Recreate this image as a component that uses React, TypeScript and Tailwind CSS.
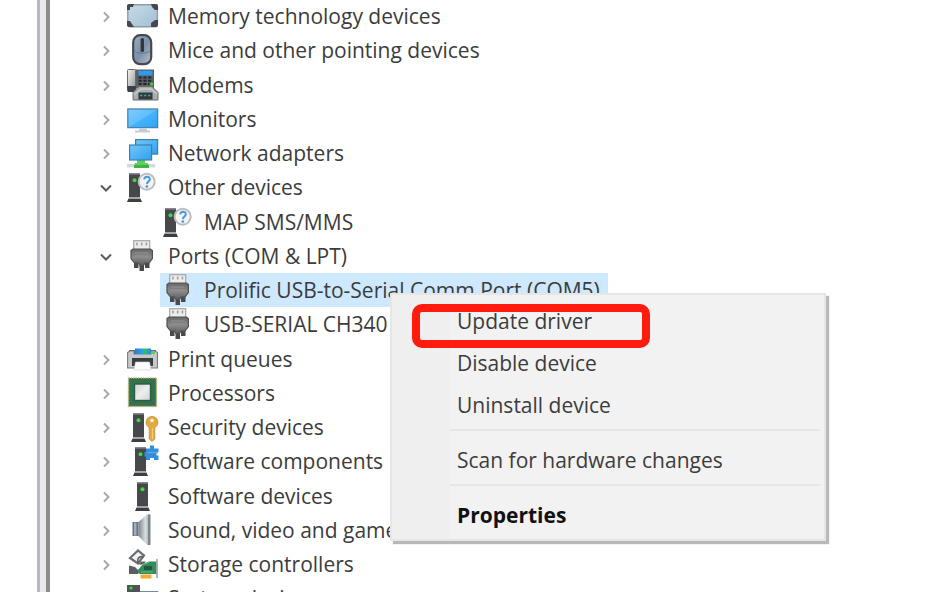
import React from "react";

type IconProps = { id: string };

function Svg({ children }: { children: React.ReactNode }) {
  return (
    <svg viewBox="0 0 32 32" className="size-8 shrink-0" aria-hidden="true">
      {children}
    </svg>
  );
}

function MemoryIcon({ id }: IconProps) {
  return (
    <Svg>
      <defs>
        <linearGradient id={id} x1="0" y1="0" x2="1" y2="1">
          <stop offset="0" stopColor="#c6dbe8" />
          <stop offset="1" stopColor="#a3bfd2" />
        </linearGradient>
      </defs>
      <rect x="0.8" y="4.8" width="29.6" height="22" rx="2" fill={`url(#${id})`} stroke="#8e9ba5" strokeWidth="1.4" />
      <path d="M0 10V6a2 2 0 0 1 2-2h5L6 7H3v3zM31 10V6a2 2 0 0 0-2-2h-5l1 3 3 3zM0 21v4a2 2 0 0 0 2 2h5l-2-3-2-3zM31 20v5a2 2 0 0 1-2 2h-5v-4l4-3z" fill="#45494c" />
    </Svg>
  );
}

function MouseIcon({ id }: IconProps) {
  return (
    <Svg>
      <defs>
        <linearGradient id={id} x1="0" y1="0" x2="1" y2="1">
          <stop offset="0" stopColor="#9fb0c4" />
          <stop offset="0.5" stopColor="#7b8fa8" />
          <stop offset="1" stopColor="#b3c0d0" />
        </linearGradient>
      </defs>
      <rect x="6.2" y="1.2" width="18" height="29" rx="7" fill={`url(#${id})`} stroke="#45494f" strokeWidth="2.2" />
      <path d="M8 17c3 3 11 3 15 0" fill="none" stroke="#5f7187" strokeWidth="0.8" />
      <rect x="13.6" y="4" width="3.4" height="14" rx="1.5" fill="#33373d" />
    </Svg>
  );
}

function ModemIcon({ id }: IconProps) {
  return (
    <Svg>
      <defs>
        <linearGradient id={id} x1="0" y1="0" x2="1" y2="1">
          <stop offset="0" stopColor="#f4f4f4" />
          <stop offset="1" stopColor="#8f8f8f" />
        </linearGradient>
      </defs>
      <rect x="8" y="0.5" width="19" height="19" fill="#5a6066" />
      <rect x="0.5" y="0.5" width="8" height="22" rx="1" fill={`url(#${id})`} stroke="#6b6b6b" />
      <path d="M0 17h9v6H1z" fill="#3d4246" />
      <rect x="11.5" y="1.8" width="14" height="4.6" fill="#2d9cf0" />
      <path d="M11.500 8.500h13M11.500 11.800h13M11.500 15h11" stroke="#22282e" strokeWidth="2" strokeDasharray="3.200 1.600" />
      <circle cx="24.6" cy="15" r="1.6" fill="#3ccf35" />
      <path d="M12 17.500h13l6 6V31H6v-7.500z" fill="#a9abad" stroke="#6c6e70" />
      <path d="M7 26l7-6h10l6 5" fill="none" stroke="#c9cacb" strokeWidth="1.4" />
      <rect x="11.5" y="23.500" width="14" height="7" fill="#33393c" />
      <path d="M13 26.5h11" stroke="#2fa59a" strokeWidth="1.5" strokeDasharray="2.4 1.6" />
    </Svg>
  );
}

function MonitorIcon({ id }: IconProps) {
  return (
    <Svg>
      <defs>
        <linearGradient id={id} x1="0" y1="0" x2="1" y2="1">
          <stop offset="0" stopColor="#7fcbff" />
          <stop offset="0.5" stopColor="#5fbffc" />
          <stop offset="0.52" stopColor="#45b2fa" />
          <stop offset="1" stopColor="#32a5f3" />
        </linearGradient>
      </defs>
      <rect x="0.8" y="6" width="29.8" height="18.6" fill={`url(#${id})`} stroke="#4585b2" strokeWidth="1.3" />
      <path d="M12 25.5h8v2h3v2H8v-2h4z" fill="#c3ccd4" />
    </Svg>
  );
}

function NetworkIcon({ id }: IconProps) {
  return (
    <Svg>
      <defs>
        <linearGradient id={id} x1="0" y1="0" x2="1" y2="1">
          <stop offset="0" stopColor="#75c7fc" />
          <stop offset="1" stopColor="#2f9fec" />
        </linearGradient>
      </defs>
      <rect x="8.6" y="2.6" width="22" height="14.5" fill={`url(#${id})`} stroke="#3d80b0" strokeWidth="1.2" />
      <rect x="0" y="27" width="28" height="3.4" fill="#d4d8d8" />
      <path d="M10 23h8v3h3l1 5H7l1-5h2z" fill="#5fd05a" />
      <path d="M7 28h15v3H7z" fill="#3fb440" />
      <rect x="2.6" y="8" width="22" height="15" fill={`url(#${id})`} stroke="#3d80b0" strokeWidth="1.2" />
    </Svg>
  );
}

function Tower({ x, y = 2.5 }: { x: number; y?: number }) {
  return (
    <g transform={`translate(${x} ${y})`}>
      <path d="M2 0h11v24H2z" fill="#46484c" />
      <path d="M2 0h11v1.5H2z" fill="#6a6d71" />
      <path d="M1.5 25h12l1.5 3.5H0z" fill="#3c3e41" />
      <path d="M2 24h11v1H2z" fill="#a8aaac" />
      <circle cx="7.5" cy="6.8" r="2" fill="#36e03a" />
    </g>
  );
}

function UnknownIcon() {
  return (
    <Svg>
      <Tower x={0} />
      <circle cx="19.700" cy="10.700" r="8" fill="#f3f4f5" stroke="#bcbec0" strokeWidth="2" />
      <path d="M17.200 8.300c.3-3.6 6-3.4 5.6.2-.3 2-2.7 2.2-2.9 4.6" fill="none" stroke="#4f98d8" strokeWidth="2" />
      <circle cx="19.800" cy="15.600" r="1.300" fill="#4f98d8" />
    </Svg>
  );
}

function PortIcon({ id }: IconProps) {
  return (
    <Svg>
      <defs>
        <linearGradient id={id} x1="0" y1="0" x2="0" y2="1">
          <stop offset="0" stopColor="#686868" />
          <stop offset="0.5" stopColor="#8a8a8a" />
          <stop offset="1" stopColor="#5b5b5b" />
        </linearGradient>
      </defs>
      <rect x="6.7" y="0.7" width="16" height="10" fill="#ececec" stroke="#a6a6a6" strokeWidth="1.2" />
      <path d="M10 2.500v3M14.7 2.500v3M19.4 2.500v3" stroke="#a0a0a0" strokeWidth="1.600" />
      <path d="M7 20h4.5v8H7zM18 20h4.5v8H18zM12.5 21h4.5v10h-4.5z" fill="#4a4a4a" />
      <path d="M4 10.5l2-1.5h17.4l2 1.5v8L22 23h-4l-1.5 2.5h-3.6L11.500 23h-4L4 18.500z" fill={`url(#${id})`} stroke="#505050" strokeWidth="1.2" />
      <path d="M8 13h13.500M8 16h13.500" stroke="#9a9a9a" strokeWidth="0.8" />
    </Svg>
  );
}

function PrinterIcon({ id }: IconProps) {
  return (
    <Svg>
      <defs>
        <linearGradient id={id} x1="0" y1="0" x2="1" y2="0">
          <stop offset="0" stopColor="#1f7fe6" />
          <stop offset="0.4" stopColor="#25a0f0" />
          <stop offset="0.65" stopColor="#2fbf62" />
          <stop offset="1" stopColor="#2388ec" />
        </linearGradient>
      </defs>
      <path d="M2 7h27v6H2z" fill="#5d6165" />
      <path d="M0.600 9.500L3 8h4v3h17V8h4l2.500 1.500V25H.6z" fill="#c6c9cb" stroke="#7a7d80" strokeWidth="1.1" />
      <path d="M8 5.500h16V11H8z" fill={`url(#${id})`} />
      <path d="M5 15h21v8h-3l-1-4H9l-1 4H5z" fill="#3b3e41" />
      <path d="M25 10h3" stroke="#3fcf3b" strokeWidth="1.5" />
      <path d="M8.500 19h14l1.500 8H7z" fill="#fbfbfb" stroke="#d0d2d4" strokeWidth="0.6" />
    </Svg>
  );
}

function ProcessorIcon({ id }: IconProps) {
  return (
    <Svg>
      <defs>
        <linearGradient id={id} x1="0" y1="0" x2="1" y2="1">
          <stop offset="0" stopColor="#cfd1d2" />
          <stop offset="0.500" stopColor="#eeeeee" />
          <stop offset="1" stopColor="#cfd1d2" />
        </linearGradient>
      </defs>
      <rect x="1.500" y="1" width="28" height="28.500" fill="#35704f" />
      <rect x="1.500" y="1" width="28" height="28.500" fill="none" stroke="#c9b765" strokeWidth="1.600" strokeDasharray="1.200 1.200" />
      <rect x="7.500" y="7" width="16" height="16.500" fill={`url(#${id})`} stroke="#2a5f44" strokeWidth="1.400" />
    </Svg>
  );
}

function SecurityIcon() {
  return (
    <Svg>
      <Tower x={4} />
      <path d="M25 5.500a5.800 5.800 0 0 1 2.800 10.900V28L25 30.500 22.200 28V16.400A5.800 5.800 0 0 1 25 5.500z" fill="#e2ab42" stroke="#c29338" strokeWidth="0.800" />
      <circle cx="25" cy="9.500" r="1.800" fill="#fff6dc" />
      <path d="M25.500 17v11" stroke="#f3cd74" strokeWidth="1.200" />
    </Svg>
  );
}

function ComponentIcon() {
  return (
    <Svg>
      <Tower x={6} />
      <path d="M19 3.500h4v-3h4v3h4.500v3.500h-2v3.500h2V15H27v-2h-4v2h-4v-3.500h-1.500V7H19z" fill="#338fdb" />
      <path d="M20 7.500h11" stroke="#5aabea" strokeWidth="1.200" />
    </Svg>
  );
}

function DeviceIcon() {
  return (
    <Svg>
      <Tower x={8} />
    </Svg>
  );
}

function SoundIcon({ id }: IconProps) {
  return (
    <Svg>
      <defs>
        <linearGradient id={id} x1="0" y1="0" x2="1" y2="0">
          <stop offset="0" stopColor="#7d878e" />
          <stop offset="0.600" stopColor="#d9dee2" />
          <stop offset="1" stopColor="#9aa2a8" />
        </linearGradient>
      </defs>
      <path d="M5.500 8h6v14h-6z" fill="#66737e" />
      <path d="M7 8.500h2.500v13H7z" fill="#a2afb9" />
      <path d="M11.500 8L20 0.500h3v30.500h-3L11.500 22z" fill={`url(#${id})`} />
      <path d="M21 0.500h2.500V31H21z" fill="#7d868c" />
    </Svg>
  );
}

function StorageIcon() {
  return (
    <Svg>
      <path d="M3 10l8-7.500 6 5-6 8z" fill="#f2f2f2" stroke="#6b6e70" strokeWidth="2.200" />
      <path d="M16.500 9.500a3.500 3.500 0 1 0 .5 5h-3.500" fill="none" stroke="#606365" strokeWidth="1.800" />
      <path d="M2 17.500l6 1.500 4 4-1 3H2z" fill="#5a5e61" />
      <path d="M11 25v-3l5-6 6-2.500h7.500V26H13z" fill="#358b5e" />
      <path d="M17 18h8v4h-8z" fill="#1f5a3c" />
      <path d="M16 16.500l6-2M14 24h12" stroke="#62b88a" strokeWidth="1.200" />
      <path d="M30 11v19" stroke="#9a9ea0" strokeWidth="1.500" />
      <path d="M13.500 26.500h11v4h-11z" fill="#f2aa30" />
    </Svg>
  );
}

function SystemIcon() {
  return (
    <Svg>
      <path d="M0 3h13v26H0z" fill="#4f5356" />
      <circle cx="4" cy="6" r="1.600" fill="#36e03a" />
      <path d="M13 9.500h18V24H13z" fill="#79bdea" stroke="#6f8ea5" />
    </Svg>
  );
}

type Row = {
  label: string;
  icon: (p: IconProps) => React.ReactElement;
  state?: "open" | "child" | "selected";
};

const rows: Row[] = [
  { label: "Memory technology devices", icon: MemoryIcon },
  { label: "Mice and other pointing devices", icon: MouseIcon },
  { label: "Modems", icon: ModemIcon },
  { label: "Monitors", icon: MonitorIcon },
  { label: "Network adapters", icon: NetworkIcon },
  { label: "Other devices", icon: UnknownIcon, state: "open" },
  { label: "MAP SMS/MMS", icon: UnknownIcon, state: "child" },
  { label: "Ports (COM & LPT)", icon: PortIcon, state: "open" },
  { label: "Prolific USB-to-Serial Comm Port (COM5)", icon: PortIcon, state: "selected" },
  { label: "USB-SERIAL CH340", icon: PortIcon, state: "child" },
  { label: "Print queues", icon: PrinterIcon },
  { label: "Processors", icon: ProcessorIcon },
  { label: "Security devices", icon: SecurityIcon },
  { label: "Software components", icon: ComponentIcon },
  { label: "Software devices", icon: DeviceIcon },
  { label: "Sound, video and game controllers", icon: SoundIcon },
  { label: "Storage controllers", icon: StorageIcon },
  { label: "System devices", icon: SystemIcon },
];

function TreeRow({ row, index }: { row: Row; index: number }) {
  const Icon = row.icon;
  const child = row.state === "child" || row.state === "selected";
  const open = row.state === "open";
  return (
    <li
      role="treeitem"
      aria-level={child ? 2 : 1}
      aria-selected={row.state === "selected"}
      aria-expanded={child ? undefined : open}
      className="flex h-[34px] items-stretch nth-[4n+3]:h-[35px]"
    >
      {child ? (
        <span className="w-16 shrink-0" />
      ) : (
        <button type="button" aria-label={`Toggle ${row.label}`} className="mr-2 flex w-5 shrink-0 items-center justify-center pt-0.5">
          <svg viewBox="0 0 12 12" className="size-3" fill="none" strokeWidth="2" aria-hidden="true">
            {open ? <path d="M1 3.500l5 5 5-5" stroke="#5a5a5a" /> : <path d="M4 1.500l4.500 4.500L4 10.500" stroke="#a9a9a9" />}
          </svg>
        </button>
      )}
      <span
        className={
          row.state === "selected"
            ? "flex items-center gap-[9px] bg-[#cde8ff] pr-2 pl-[3px]"
            : "flex items-center gap-[9px] pr-2 pl-[3px]"
        }
      >
        <Icon id={`icon-${index}`} />
        <span>{row.label}</span>
      </span>
    </li>
  );
}

function MenuItem({ label, bold, marked }: { label: string; bold?: boolean; marked?: boolean }) {
  return (
    <button
      type="button"
      role="menuitem"
      className={
        bold
          ? "relative flex h-[42px] w-full items-center pt-1.5 pl-[65px] font-bold text-[#111]"
          : "relative flex h-[42px] w-full items-center pt-1.5 pl-[65px]"
      }
    >
      {label}
      {marked && <span className="absolute top-[7px] left-5 h-11 w-[238px] rounded-[10px] border-8 border-[#ff1c0e]" />}
    </button>
  );
}

function Separator() {
  return (
    <div role="separator" className="flex h-[13px] items-center pr-1 pl-[58px]">
      <span className="h-0.5 w-full bg-[#e6e6e6]" />
    </div>
  );
}

export default function App() {
  return (
    <div className="relative flex h-screen overflow-hidden bg-white font-['Open_Sans','Noto_Sans',sans-serif] text-[21px] leading-8 whitespace-nowrap text-[#3c3c3c]">
      <div className="flex w-[50px] shrink-0 justify-end">
        <span className="w-[3px] bg-[#b6bac4]" />
        <span className="w-[6px] bg-[#e9e9e9]" />
        <span className="w-[4px] bg-[#8c8c8c]" />
      </div>
      <main className="min-w-0 flex-1 pl-[46px]">
        <ul role="tree" aria-label="Devices" className="-mt-px">
          {rows.map((row, i) => (
            <TreeRow key={row.label} row={row} index={i} />
          ))}
        </ul>
      </main>
      <div
        role="menu"
        aria-label="Device actions"
        className="absolute top-[293px] left-[390px] w-[436px] border-2 border-[#e6e6e6] bg-[linear-gradient(90deg,#efefef_58px,#f2f2f2_58px)] pt-0.5 pb-1.5 shadow-[3px_3px_1px_#b8b8b8]"
      >
        <MenuItem label="Update driver" marked />
        <MenuItem label="Disable device" />
        <MenuItem label="Uninstall device" />
        <Separator />
        <MenuItem label="Scan for hardware changes" />
        <Separator />
        <MenuItem label="Properties" bold />
      </div>
    </div>
  );
}
